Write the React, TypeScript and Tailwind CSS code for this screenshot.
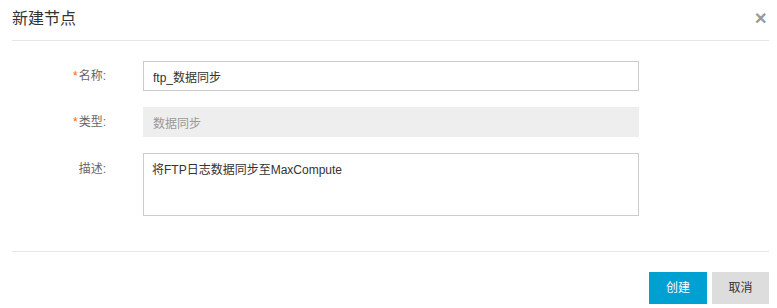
import React from "react";

const font = { fontFamily: '"Liberation Sans", "Noto Sans CJK SC", sans-serif' };

function Label({ text, required }: { text: string; required?: boolean }) {
  return (
    <div className="w-[106px] shrink-0 text-right text-[12px] text-[#666] leading-[14px]">
      {required && <span className="text-[#ff6600] mr-[1px]">*</span>}
      {text}:
    </div>
  );
}

export default function App() {
  return (
    <div className="w-[777px] h-[308px] bg-white flex flex-col" style={font}>
      <div className="ml-3 mr-2 h-[41px] flex items-center justify-between border-b border-[#e5e5e5]">
        <h1 className="text-[16px] text-[#333] leading-none -mt-[2px]">新建节点</h1>
        <button className="text-[#999] text-[16px] font-bold leading-none mr-[2px] -mt-[3px]">✕</button>
      </div>

      <div className="flex flex-col gap-4 pt-5">
        <div className="flex items-center">
          <Label text="名称" required />
          <input
            className="ml-[37px] w-[496px] h-[30px] border border-[#cccccc] px-[9px] text-[12px] text-[#333] outline-none"
            defaultValue="ftp_数据同步"
          />
        </div>
        <div className="flex items-center">
          <Label text="类型" required />
          <input
            disabled
            className="ml-[37px] w-[496px] h-[30px] bg-[#eeeeee] px-[10px] text-[12px] text-[#999] outline-none"
            defaultValue="数据同步"
          />
        </div>
        <div className="flex items-start">
          <div className="pt-[9px]">
            <Label text="描述" />
          </div>
          <textarea
            className="ml-[37px] w-[496px] h-[63px] border border-[#cccccc] px-[8px] py-[7px] text-[12px] text-[#333] outline-none resize-none"
            defaultValue="将FTP日志数据同步至MaxCompute"
          />
        </div>
      </div>

      <div className="ml-3 mr-2 mt-[35px] border-t border-[#e5e5e5]" />

      <div className="flex justify-end gap-[5px] mr-2 mt-[20px]">
        <button className="w-[58px] h-[32px] bg-[#00a0d2] text-white text-[12px]">创建</button>
        <button className="w-[57px] h-[32px] bg-[#dddddd] text-[#333] text-[12px]">取消</button>
      </div>
    </div>
  );
}
